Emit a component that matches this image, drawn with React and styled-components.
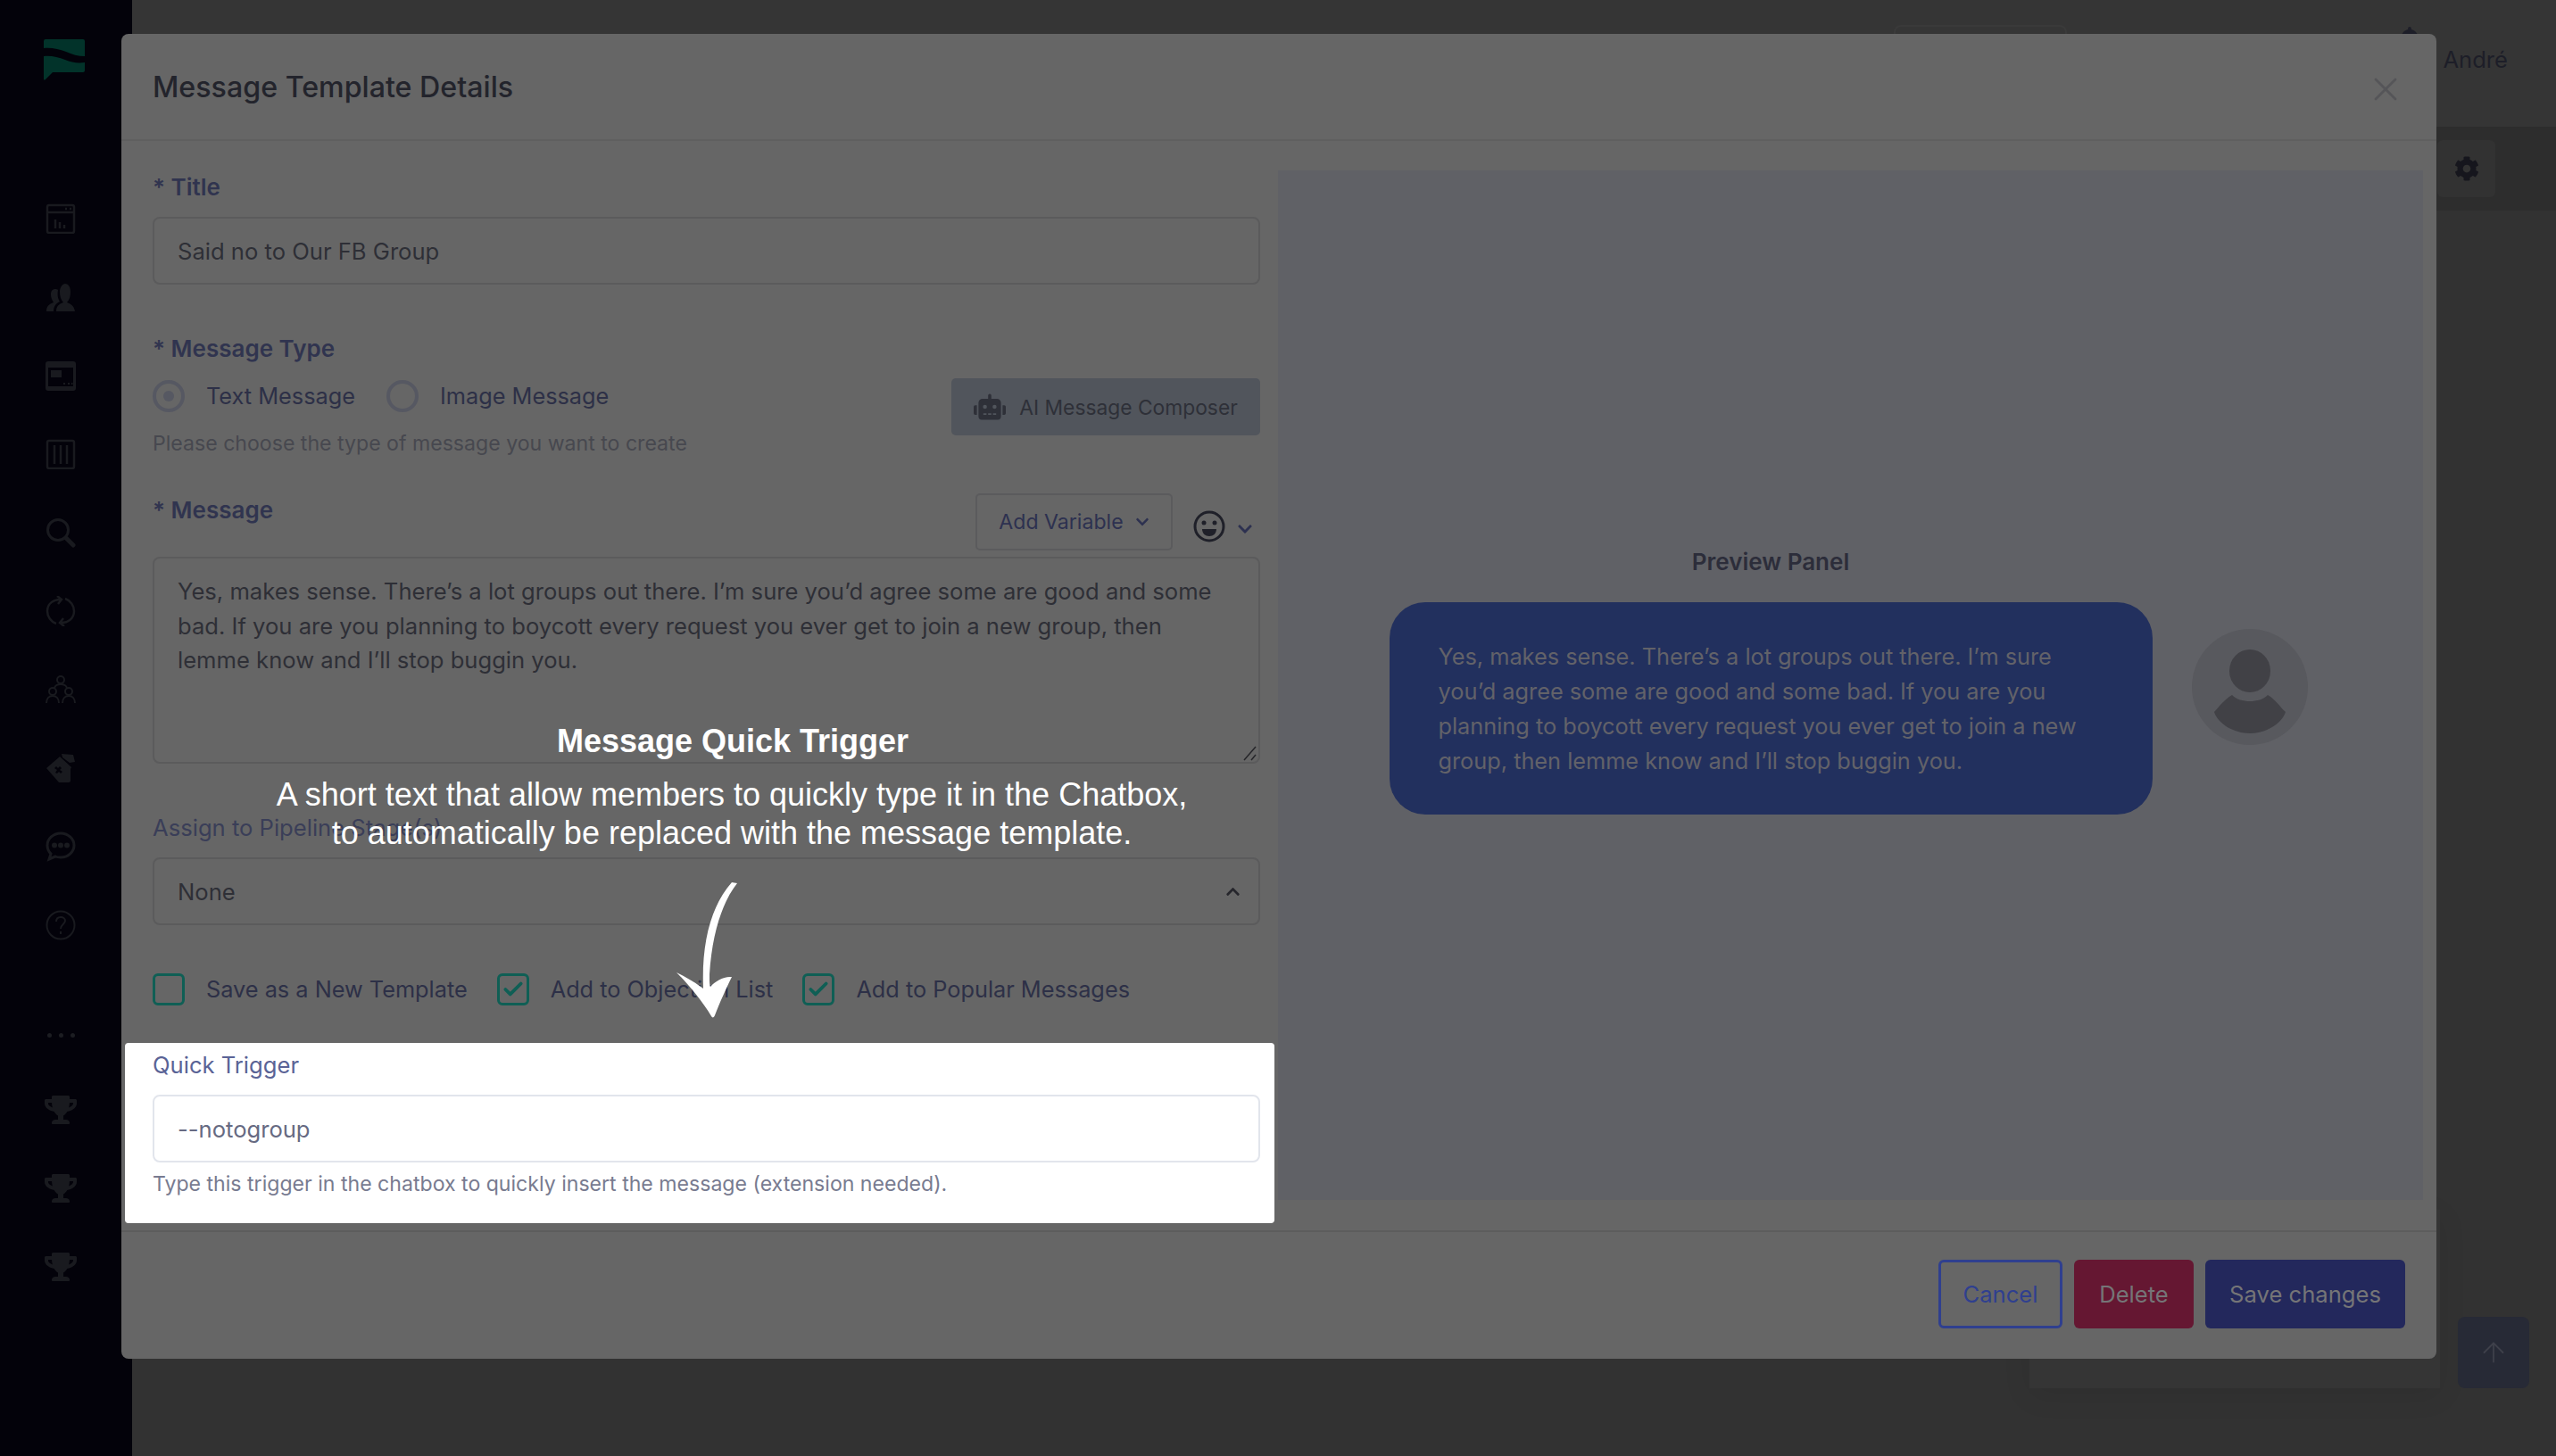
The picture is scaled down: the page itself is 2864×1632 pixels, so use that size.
import React from "react";
import styled, { createGlobalStyle } from "styled-components";
import { FaRobot, FaCog, FaTrophy, FaBell, FaChevronUp, FaChevronDown } from "react-icons/fa";
import { FiArrowUp, FiX, FiCheck } from "react-icons/fi";

const GlobalStyle = createGlobalStyle`
  html, body { margin: 0; padding: 0; background: #323232; }
  body { font-family: Inter, "Noto Sans", sans-serif; }
  * { box-sizing: border-box; }
`;

const Page = styled.div`
  position: relative;
  width: 2864px;
  height: 1632px;
  display: flex;
  overflow: hidden;
  background: #323232;
`;

const Sidebar = styled.aside`
  width: 148px;
  flex: none;
  padding-top: 44px;
  background: #03020a;
  display: flex;
  flex-direction: column;
`;

const Logo = styled.svg`
  display: block;
  width: 46px;
  height: 46px;
  margin: 0 0 111px 49px;
`;

const NavItem = styled.div`
  height: 88px;
  width: 136px;
  display: flex;
  align-items: center;
  justify-content: center;
  color: #191a1f;
  font-size: 36px;
`;

const NavDots = styled.div`
  width: 136px;
  margin: 59px 0 20px;
  height: 40px;
  display: flex;
  align-items: center;
  justify-content: center;
  gap: 8px;
  & > i {
    width: 5px;
    height: 5px;
    border-radius: 50%;
    background: #1c1d22;
  }
`;

const Main = styled.main`
  flex: 1;
  display: flex;
  flex-direction: column;
`;

const TopBar = styled.header`
  height: 142px;
  flex: none;
  background: #353535;
  display: flex;
  justify-content: flex-end;
  align-items: flex-start;
  padding: 48px 54px 0 0;
  gap: 22px;
`;

const UserName = styled.span`
  font-size: 25.6px;
  line-height: 38px;
  color: #1d1e28;
`;

const BellWrap = styled.span`
  color: #1d1e28;
  font-size: 30px;
  margin-top: -18px;
`;

const SubBar = styled.div`
  height: 94px;
  flex: none;
  background: #2d2d2d;
  display: flex;
  justify-content: flex-end;
  padding: 15px 68px 0 0;
`;

const GearButton = styled.div`
  width: 65px;
  height: 64px;
  background: #323232;
  border-radius: 6px;
  display: flex;
  align-items: center;
  justify-content: center;
  color: #16161d;
  font-size: 28px;
`;

const Content = styled.div`
  flex: 1;
  display: flex;
  justify-content: flex-end;
  align-items: flex-end;
  gap: 20px;
  padding: 0 30px 76px 0;
`;

const BackCard = styled.div`
  width: 460px;
  height: 200px;
  background: #353535;
  box-shadow: 0 8px 30px rgba(0, 0, 0, 0.08);
`;

const ScrollTop = styled.div`
  width: 80px;
  height: 80px;
  border-radius: 8px;
  background: #272a36;
  color: #3f414b;
  font-size: 36px;
  display: flex;
  align-items: center;
  justify-content: center;
  & svg {
    stroke-width: 1.2;
  }
`;

const Modal = styled.section`
  position: absolute;
  left: 136px;
  top: 38px;
  width: 2594px;
  height: 1485px;
  background: #666666;
  border-radius: 8px;
  display: flex;
  flex-direction: column;
  color: #2d2e36;
  overflow: hidden;
`;

const ModalHeader = styled.div`
  height: 120px;
  flex: none;
  padding: 0 35px;
  display: flex;
  align-items: center;
  justify-content: space-between;
  border-bottom: 2px solid #5f5f5f;
`;

const ModalTitle = styled.h2`
  margin: 0;
  font-size: 32.2px;
  font-weight: 500;
  color: #23242c;
`;

const CloseIcon = styled.span`
  display: flex;
  color: #555558;
  font-size: 44px;
  margin-top: 6px;
  & svg {
    stroke-width: 1.5;
  }
`;

const ModalBody = styled.div`
  flex: 1;
  display: flex;
  gap: 20px;
  min-height: 0;
`;

const FormColumn = styled.div`
  width: 1276px;
  flex: none;
  padding: 36px 0 0 35px;
`;

const Label = styled.div`
  font-size: ${(p) => (p.$plain ? 25.6 : 26)}px;
  line-height: 32px;
  font-weight: ${(p) => (p.$plain ? 400 : 600)};
  color: ${(p) => p.$color || "#30344f"};
`;

const MessageLabel = styled(Label)`
  margin-top: 3px;
`;

const TextInput = styled.div`
  height: 76px;
  margin-top: 17px;
  padding: 0 20px 0 26px;
  display: flex;
  align-items: center;
  justify-content: space-between;
  font-size: 25.6px;
  color: ${(p) => (p.$light ? "#666a82" : "#2e2f36")};
  background: ${(p) => (p.$light ? "#ffffff" : "transparent")};
  border: 2px solid ${(p) => (p.$light ? "#e2e5ec" : "#5b5b5c")};
  border-radius: 8px;
`;

const TitleField = styled.div`
  margin-bottom: 56px;
`;

const TypeRow = styled.div`
  display: flex;
  justify-content: space-between;
  align-items: flex-start;
  margin-top: 17px;
`;

const Options = styled.div`
  display: flex;
  align-items: center;
  gap: ${(p) => p.$gap || 35}px;
  padding-top: ${(p) => p.$top || 0}px;
`;

const Option = styled.label`
  display: flex;
  align-items: center;
  gap: 24px;
  font-size: 25.3px;
  line-height: 36px;
  color: #2d3047;
`;

const Radio = styled.span`
  width: 36px;
  height: 36px;
  border-radius: 50%;
  border: 4px solid #565862;
  display: flex;
  align-items: center;
  justify-content: center;
  &::after {
    content: "";
    width: 12px;
    height: 12px;
    border-radius: 50%;
    background: ${(p) => (p.$on ? "#565862" : "transparent")};
  }
`;

const Hint = styled.div`
  font-size: 23.1px;
  line-height: 32px;
  margin-top: ${(p) => p.$top || 19}px;
  color: ${(p) => p.$color || "#47484f"};
`;

const ComposerButton = styled.div`
  width: 346px;
  height: 64px;
  background: #51555c;
  border-radius: 5px;
  display: flex;
  align-items: center;
  justify-content: center;
  gap: 15px;
  font-size: 22.8px;
  color: #2e3038;
  & svg {
    font-size: 36px;
  }
`;

const MessageHead = styled.div`
  display: flex;
  justify-content: space-between;
  align-items: flex-start;
  margin-top: 40px;
`;

const MessageTools = styled.div`
  display: flex;
  align-items: center;
  gap: 23px;
`;

const VariableButton = styled.div`
  width: 221px;
  height: 64px;
  border: 2px solid #5b5b5d;
  border-radius: 5px;
  display: flex;
  align-items: center;
  justify-content: center;
  gap: 13px;
  font-size: 23.1px;
  color: #2d3150;
  & svg {
    font-size: 16px;
  }
`;

const EmojiPicker = styled.div`
  display: flex;
  align-items: center;
  gap: 13px;
  color: #1f2029;
  margin: 10px 0 0;
  width: 75px;
  & svg:last-child {
    font-size: 18px;
    color: #2d3150;
    margin-top: 6px;
  }
`;

const MessageBox = styled.div`
  position: relative;
  height: 232px;
  margin-top: 7px;
  padding: 18px 26px;
  border: 2px solid #5b5b5c;
  border-radius: 8px;
  font-size: 25.6px;
  line-height: 38.7px;
  color: #2e2f36;
`;

const ResizeGrip = styled.svg`
  position: absolute;
  right: 1px;
  bottom: 1px;
  width: 18px;
  height: 18px;
`;

const SelectField = styled.div`
  margin-top: 56px;
`;

const Checks = styled(Options)`
  margin-top: 54px;
`;

const CheckBox = styled.span`
  width: 36px;
  height: 36px;
  flex: none;
  border: 3px solid #0f5f55;
  border-radius: 6px;
  display: flex;
  align-items: center;
  justify-content: center;
  color: #0f5f55;
  font-size: 26px;
  & svg {
    stroke-width: 3.5;
  }
`;

const Highlight = styled.div`
  margin: 42px 0 0 -31px;
  width: 1288px;
  height: 202px;
  padding: 9px 16px 0 31px;
  background: #ffffff;
  border-radius: 4px;
`;

const PreviewPanel = styled.div`
  width: 1283px;
  height: 1154px;
  margin-top: 33px;
  background: #606166;
  display: flex;
  justify-content: center;
  align-items: center;
  gap: 44px;
  padding: 0 5px 9px 0;
`;

const PreviewColumn = styled.div`
  width: 855px;
`;

const PreviewTitle = styled.div`
  text-align: center;
  font-size: 26px;
  line-height: 32px;
  font-weight: 600;
  color: #2c2d3a;
  margin-bottom: 29px;
`;

const Bubble = styled.div`
  height: 238px;
  border-radius: 40px;
  padding: 41px 55px;
  background: #22305e;
  color: #626269;
  font-size: 25.3px;
  line-height: 39px;
`;

const Avatar = styled.svg`
  width: 130px;
  height: 130px;
  margin-top: 13px;
  flex: none;
`;

const ModalFooter = styled.div`
  height: 144px;
  flex: none;
  border-top: 2px solid #5d5d5d;
  display: flex;
  justify-content: flex-end;
  padding: 31px 35px 0 0;
  gap: 13px;
`;

const Button = styled.div`
  width: ${(p) => p.$width}px;
  height: 77px;
  border-radius: 6px;
  display: flex;
  align-items: center;
  justify-content: center;
  font-size: 25.6px;
  color: ${(p) => p.$color || "#757577"};
  background: ${(p) => p.$bg || "transparent"};
  border: ${(p) => (p.$outline ? "3px solid #2f3f8f" : "none")};
`;

const Callout = styled.div`
  position: absolute;
  left: 220px;
  top: 806px;
  width: 1200px;
  text-align: center;
  color: #ffffff;
  font-family: "Liberation Sans", Arial, sans-serif;
`;

const CalloutTitle = styled.div`
  font-size: 36px;
  line-height: 50px;
  font-weight: 700;
  margin-bottom: 13px;
  padding-left: 2px;
`;

const CalloutText = styled.div`
  font-size: 36px;
  line-height: 43px;
`;

const Arrow = styled.svg`
  position: absolute;
  left: 750px;
  top: 980px;
  width: 90px;
  height: 170px;
`;

const HiddenBox = styled.div`
  position: absolute;
  left: 2122px;
  top: 28px;
  width: 194px;
  height: 40px;
  border: 2px solid #3a3a3a;
  border-radius: 8px;
`;

const iconProps = { width: 34, height: 34, viewBox: "0 0 34 34", fill: "none", stroke: "currentColor", strokeWidth: 2.5 };

const navIcons = [
  <svg {...iconProps} key="a">
    <rect x="2" y="2" width="30" height="31" rx="2" />
    <path d="M2 10h30M22 6h2M27 6h2M11 28v-10M16 28v-7M21 28v-4" />
  </svg>,
  <svg {...iconProps} stroke="none" fill="currentColor" key="b">
    <path d="M1 33c0-6 3-8 8-10-2-3-3-6-3-9 0-4 2-6 5-6 1 0 2 0 3 1-1 6 0 10 2 13-4 2-7 5-7 11zM12 33c0-6 3-8 8-10-3-3-4-7-4-12 0-5 3-9 6-9s6 3 6 9c0 5-1 9-4 12 5 2 8 4 9 10z" />
  </svg>,
  <svg {...iconProps} stroke="none" key="c">
    <path fill="currentColor" fillRule="evenodd" d="M3 1h28a3 3 0 0 1 3 3v27a3 3 0 0 1-3 3H3a3 3 0 0 1-3-3V4a3 3 0 0 1 3-3zM3 8v21h28V8zM6 11h12v8H6zM20 25h2v2h-2zM25 25h2v2h-2zM29 25h1.500v2H29z" />
  </svg>,
  <svg {...iconProps} key="d">
    <rect x="2" y="2" width="30" height="31" rx="2" />
    <path d="M10 7v21M17 7v21M24 7v21" />
  </svg>,
  <svg {...iconProps} strokeWidth="3" key="e">
    <circle cx="14" cy="14" r="11.500" />
    <path strokeWidth="5" strokeLinecap="round" d="M23 23l8 8" />
  </svg>,
  <svg {...iconProps} key="f">
    <path d="M18 4C9 3 2 9 2 17c0 6 4 12 10 14M16 30c9 1 16-5 16-13 0-6-4-12-10-14M13 0l5 4-4 5M21 34l-5-4 4-5" />
  </svg>,
  <svg {...iconProps} strokeWidth="2" key="g">
    <circle cx="17" cy="6" r="4" />
    <circle cx="8" cy="19" r="4" />
    <circle cx="26" cy="19" r="4" />
    <path d="M10 15c1-3 3-4 7-4s6 1 7 4M1 32c0-5 3-8 7-8s7 3 7 8M19 32c0-5 3-8 7-8s7 3 7 8" />
  </svg>,
  <svg {...iconProps} stroke="none" fill="currentColor" key="h">
    <path d="M18 1l13 1 2 8-6 1-8-6zM1 17L16 4l13 12-1 2v13c0 1-1 2-2 2H15zM12 15l-2 2 3 2-2 3 2 1 2-2 2 2 2-2-3-2 2-2-2-2-2 2z" />
  </svg>,
  <svg {...iconProps} strokeWidth="3" key="i">
    <path d="M17 2c8 0 15 6 15 13.500S25 29 17 29c-2 0-4 0-6-1l-7 3 2-6c-3-3-4-6-4-9.500C2 8 9 2 17 2z" />
    <circle cx="10" cy="15.500" r="1.500" fill="currentColor" />
    <circle cx="17" cy="15.500" r="1.500" fill="currentColor" />
    <circle cx="24" cy="15.500" r="1.500" fill="currentColor" />
  </svg>,
  <svg {...iconProps} strokeWidth="2" key="j">
    <circle cx="17" cy="17" r="15.500" />
    <path d="M12 13c0-3 2-5 5-5s5 2 5 4c0 4-5 4-5 9M17 24v3" />
  </svg>
];

export default function App() {
  return (
    <Page>
      <GlobalStyle />
      <Sidebar>
        <Logo viewBox="0 0 46 46">
          <path fill="#02332a" d="M2 0h42a2 2 0 0 1 2 2v17c-8 0-14-2-21-5C17 11 8 9 0 10V2a2 2 0 0 1 2-2z" />
          <path fill="#02332a" d="M0 19c8-1 16 1 24 4 7 3 14 4 22 3v9a2 2 0 0 1-2 2H10l-8 8c-1 1-2 1-2-1z" />
        </Logo>
        {navIcons.map((icon) => (
          <NavItem key={icon.key}>{icon}</NavItem>
        ))}
        <NavDots>
          <i />
          <i />
          <i />
        </NavDots>
        {[1, 2, 3].map((n) => (
          <NavItem key={n}>
            <FaTrophy />
          </NavItem>
        ))}
      </Sidebar>

      <Main>
        <TopBar>
          <BellWrap>
            <FaBell />
          </BellWrap>
          <UserName>André</UserName>
        </TopBar>
        <SubBar>
          <GearButton>
            <FaCog />
          </GearButton>
        </SubBar>
        <Content>
          <BackCard />
          <ScrollTop>
            <FiArrowUp />
          </ScrollTop>
        </Content>
      </Main>

      <HiddenBox />

      <Modal>
        <ModalHeader>
          <ModalTitle>Message Template Details</ModalTitle>
          <CloseIcon>
            <FiX />
          </CloseIcon>
        </ModalHeader>

        <ModalBody>
          <FormColumn>
            <TitleField>
              <Label>* Title</Label>
              <TextInput>Said no to Our FB Group</TextInput>
            </TitleField>

            <Label>* Message Type</Label>
            <TypeRow>
              <div>
                <Options $top={2}>
                  <Option>
                    <Radio $on />
                    Text Message
                  </Option>
                  <Option>
                    <Radio />
                    Image Message
                  </Option>
                </Options>
                <Hint>Please choose the type of message you want to create</Hint>
              </div>
              <ComposerButton>
                <FaRobot />
                AI Message Composer
              </ComposerButton>
            </TypeRow>

            <MessageHead>
              <MessageLabel>* Message</MessageLabel>
              <MessageTools>
                <VariableButton>
                  Add Variable
                  <FaChevronDown />
                </VariableButton>
                <EmojiPicker>
                  <svg width="36" height="36" viewBox="0 0 36 36" fill="none" stroke="currentColor" strokeWidth="3">
                    <circle cx="18" cy="18" r="16" />
                    <circle cx="12" cy="14" r="2.500" fill="currentColor" stroke="none" />
                    <circle cx="24" cy="14" r="2.500" fill="currentColor" stroke="none" />
                    <path d="M10 21h16c0 5-3.500 8-8 8s-8-3-8-8z" fill="currentColor" stroke="none" />
                  </svg>
                  <FaChevronDown />
                </EmojiPicker>
              </MessageTools>
            </MessageHead>
            <MessageBox>
              Yes, makes sense. There’s a lot groups out there. I’m sure you’d agree some are good and some
              <br />
              bad. If you are you planning to boycott every request you ever get to join a new group, then
              <br />
              lemme know and I’ll stop buggin you.
              <ResizeGrip viewBox="0 0 18 18" stroke="#26262a" strokeWidth="1.500">
                <path d="M3 17L16 2M11 17l5-6" />
              </ResizeGrip>
            </MessageBox>

            <SelectField>
              <Label $plain $color="#3a3e58">
                Assign to Pipeline Stage(s)
              </Label>
              <TextInput>
                None
                <FaChevronUp size={17} color="#26262c" />
              </TextInput>
            </SelectField>

            <Checks $gap={33}>
              <Option>
                <CheckBox />
                Save as a New Template
              </Option>
              <Option>
                <CheckBox>
                  <FiCheck />
                </CheckBox>
                Add to Objection List
              </Option>
              <Option>
                <CheckBox>
                  <FiCheck />
                </CheckBox>
                Add to Popular Messages
              </Option>
            </Checks>

            <Highlight>
              <Label $plain $color="#5a6396">
                Quick Trigger
              </Label>
              <TextInput $light>--notogroup</TextInput>
              <Hint $top={8} $color="#787b90">
                Type this trigger in the chatbox to quickly insert the message (extension needed).
              </Hint>
            </Highlight>
          </FormColumn>

          <PreviewPanel>
            <PreviewColumn>
              <PreviewTitle>Preview Panel</PreviewTitle>
              <Bubble>
                Yes, makes sense. There’s a lot groups out there. I’m sure you’d agree some are good and some bad. If
                you are you planning to boycott every request you ever get to join a new group, then lemme know and I’ll
                stop buggin you.
              </Bubble>
            </PreviewColumn>
            <Avatar viewBox="0 0 130 130">
              <circle cx="65" cy="65" r="65" fill="#58595e" />
              <ellipse cx="65" cy="47" rx="23" ry="24" fill="#414146" />
              <path
                fill="#414146"
                d="M45 74c5 5 12 7 20 7s15-2 20-7c9 5 14 14 20 19-4 13-22 24-40 24S29 106 25 93c5-5 11-14 20-19z"
              />
            </Avatar>
          </PreviewPanel>
        </ModalBody>

        <ModalFooter>
          <Button $outline $color="#2f3f8f" $width={139}>
            Cancel
          </Button>
          <Button $bg="#651732" $width={134}>
            Delete
          </Button>
          <Button $bg="#23285c" $width={224}>
            Save changes
          </Button>
        </ModalFooter>
      </Modal>

      <Callout>
        <CalloutTitle>Message Quick Trigger</CalloutTitle>
        <CalloutText>
          A short text that allow members to quickly type it in the Chatbox,
          <br />
          to automatically be replaced with the message template.
        </CalloutText>
      </Callout>
      <Arrow viewBox="0 0 90 170">
        <path
          fill="#ffffff"
          d="M70 9l6 1C60 30 48 65 45 112c0 8 0 12 1 14 5-6 15-12 24-11-6 12-14 30-19 43-1 3-3 3-4 1C37 142 20 122 8 110c10 5 22 12 30 18-2-50 8-92 32-119z"
        />
      </Arrow>
    </Page>
  );
}
